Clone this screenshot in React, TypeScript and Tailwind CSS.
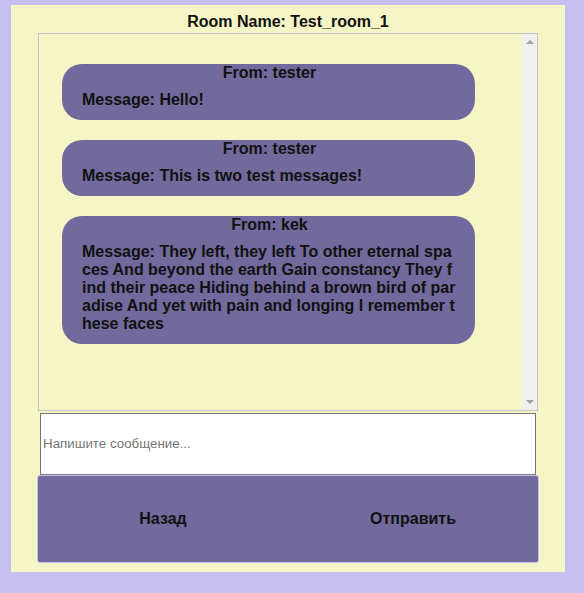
import React from "react";

const messages = [
  { from: "tester", text: "Hello!" },
  { from: "tester", text: "This is two test messages!" },
  {
    from: "kek",
    text: "They left, they left To other eternal spaces And beyond the earth Gain constancy They find their peace Hiding behind a brown bird of paradise And yet with pain and longing I remember these faces",
  },
];

export default function App() {
  return (
    <div
      className="w-full h-[593px] bg-[#c6bff0] pt-[5px] pl-[11px]"
      style={{ fontFamily: '"Liberation Sans", Arial, sans-serif' }}
    >
      <div className="w-[554px] h-[567px] bg-[#f5f5c5] flex flex-col">
        <div className="pt-[8px] h-[28px] text-center text-[16px] leading-[18px] font-bold text-[#111]">
          Room Name: Test_room_1
        </div>
        <div className="ml-[27px] w-[500px] h-[378px] border border-[#c3c3c9] flex">
          <div className="flex-1 flex flex-col gap-[20px] pt-[30px] pl-[23px]">
            {messages.map((m, i) => (
              <div
                key={i}
                className="w-[413px] bg-[#72699c] rounded-[20px] pl-5 pr-[19px] text-[16px] leading-[18px] font-bold text-[#111]"
              >
                <div className="text-center pl-[1px]">From: {m.from}</div>
                <div className="mt-[9px] mb-[11px] break-all">Message: {m.text}</div>
              </div>
            ))}
          </div>
          <div className="w-[15px] bg-[#f0f0f0] flex flex-col justify-between items-center py-[6px]">
            <div className="w-0 h-0 border-l-[4px] border-r-[4px] border-b-[4px] border-l-transparent border-r-transparent border-b-[#a3a3a3]" />
            <div className="w-0 h-0 border-l-[4px] border-r-[4px] border-t-[4px] border-l-transparent border-r-transparent border-t-[#a3a3a3]" />
          </div>
        </div>
        <div className="ml-[29px] mt-[2px] w-[496px] h-[62px] bg-white border border-[#767676] flex items-center px-[2px]">
          <span className="text-[13.33px] text-[#757575]" style={{ fontFamily: "Arial, 'Liberation Sans', sans-serif" }}>
            Напишите сообщение...
          </span>
        </div>
        <div className="ml-[26px] w-[502px] h-[88px] bg-[#72699c] border border-[#c8c1f2] rounded-[3px] flex">
          <div className="flex-1 flex items-center justify-center text-[16px] font-bold text-[#111]">Назад</div>
          <div className="flex-1 flex items-center justify-center text-[16px] font-bold text-[#111]">Отправить</div>
        </div>
      </div>
    </div>
  );
}
